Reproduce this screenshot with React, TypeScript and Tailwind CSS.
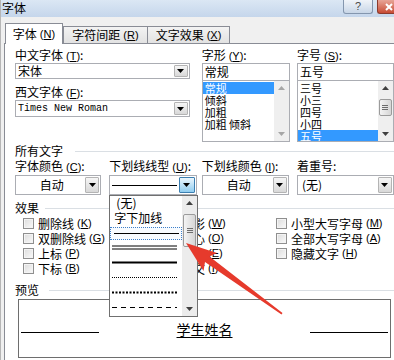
import React from "react";

function Key({ k }: { k: string }) {
  return (
    <span className="ml-[3px] font-['Liberation_Sans',sans-serif] text-[11px]">
      (<span className="underline">{k}</span>)
    </span>
  );
}

function Tri({ up = false, c = "#000" }: { up?: boolean; c?: string }) {
  return (
    <svg width="7" height="4" viewBox="0 0 7 4">
      <path d={up ? "M0 4h7L3.5 0z" : "M0 0h7L3.5 4z"} fill={c} />
    </svg>
  );
}

function DropBtn({ hot = false }: { hot?: boolean }) {
  return (
    <div
      className={
        hot
          ? "flex w-[16px] shrink-0 items-center justify-center rounded-[1px] border border-[#3c7fb1] bg-gradient-to-b from-[#eaf6fd] to-[#8fcdf0]"
          : "flex w-[14px] shrink-0 items-center justify-center rounded-[1px] border border-[#b4b4b4] bg-gradient-to-b from-[#f6f6f6] to-[#d8d8d8]"
      }
    >
      <Tri />
    </div>
  );
}

function Combo({ className, children, hot }: { className: string; children: React.ReactNode; hot?: boolean }) {
  return (
    <div className={"flex border border-[#abadb3] bg-white p-[1px] " + className}>
      <div className="flex min-w-0 flex-1 items-center overflow-hidden whitespace-nowrap pl-[1px] leading-[12px]">{children}</div>
      <DropBtn hot={hot} />
    </div>
  );
}

function Label({ children }: { children: React.ReactNode }) {
  return <div className="h-[16px] whitespace-nowrap leading-[16px]">{children}</div>;
}

function Thumb({ className }: { className: string }) {
  return (
    <div className={"mx-[1px] flex flex-col items-center justify-center gap-[1px] rounded-[2px] border border-[#9b9b9b] bg-gradient-to-r from-[#f4f4f4] to-[#d6d6d6] " + className}>
      <div className="h-px w-[6px] bg-[#6d6d6d]" />
      <div className="h-px w-[6px] bg-[#6d6d6d]" />
      <div className="h-px w-[6px] bg-[#6d6d6d]" />
    </div>
  );
}

function ListBox({ items, sel, thumb }: { items: string[]; sel: number; thumb?: boolean }) {
  return (
    <div className="-mt-px flex h-[62px] border border-[#abadb3] bg-white">
      <div className="flex-1 overflow-hidden pt-[1px] text-[11px]">
        {items.map((t, i) => (
          <div
            key={t}
            className={"h-[12px] whitespace-pre pl-[2px] leading-[12px] " + (i === sel ? "bg-[#3399ff] text-white" : "")}
          >
            {t}
          </div>
        ))}
      </div>
      <div className="flex w-[15px] flex-col bg-[#efefef]">
        <div className="flex h-[14px] items-center justify-center">
          <Tri up c={thumb ? "#404040" : "#a6a6a6"} />
        </div>
        {thumb ? <Thumb className="mt-[4px] h-[17px]" /> : null}
        <div className="flex-1" />
        <div className="flex h-[14px] items-center justify-center">
          <Tri c={thumb ? "#404040" : "#a6a6a6"} />
        </div>
      </div>
    </div>
  );
}

function Check({ t, k }: { t: string; k: string }) {
  return (
    <div className="flex h-[15px] items-center whitespace-nowrap leading-[15px]">
      <span className="mr-[4px] h-[11px] w-[11px] shrink-0 border border-[#8f8f8f] bg-gradient-to-br from-[#dcdcdc] to-[#fafafa] shadow-[inset_0_0_0_1px_#f4f4f4]" />
      {t}
      <Key k={k} />
    </div>
  );
}

function Section({ title, line }: { title: string; line: string }) {
  return (
    <div className="flex h-[14px] items-center leading-[14px]">
      <span className="whitespace-nowrap">{title}</span>
      <div className={"h-px flex-1 bg-[#dadfe4] " + line} />
    </div>
  );
}

function LineSample({ kind }: { kind: string }) {
  return (
    <svg width="65" height="5" viewBox="0 0 65 5">
      {kind === "single" && <line x1="0" y1="2.5" x2="65" y2="2.5" stroke="#000" strokeWidth="1" />}
      {kind === "double" && (
        <>
          <line x1="0" y1="1" x2="65" y2="1" stroke="#000" strokeWidth="1" />
          <line x1="0" y1="4" x2="65" y2="4" stroke="#000" strokeWidth="1" />
        </>
      )}
      {kind === "thick" && <line x1="0" y1="2.5" x2="65" y2="2.5" stroke="#000" strokeWidth="2" />}
      {kind === "dot" && <line x1="0" y1="2.5" x2="65" y2="2.5" stroke="#000" strokeWidth="1" strokeDasharray="1 1" />}
      {kind === "dot2" && <line x1="0" y1="2.5" x2="65" y2="2.5" stroke="#000" strokeWidth="2" strokeDasharray="2 1.5" />}
      {kind === "dash" && <line x1="0" y1="2.5" x2="65" y2="2.5" stroke="#000" strokeWidth="1" strokeDasharray="5 4" />}
    </svg>
  );
}

export default function App() {
  return (
    <div className="relative h-[360px] w-[394px] overflow-hidden border-l border-[#b6b6b6] bg-[#f0f0f0] font-['Noto_Sans_CJK_SC',sans-serif] text-[12px] text-black">
      {/* title bar */}
      <div className="flex h-[17px] items-start justify-between bg-gradient-to-b from-[#dbe7f4] to-[#c5d6eb]">
        <span className="pl-[1px] leading-[16px]">字体</span>
        <div className="flex gap-[4px]">
          <div className="flex h-[14px] w-[30px] items-center justify-center rounded-b-[3px] border border-t-0 border-[#8496ae] bg-gradient-to-b from-[#f0f4f9] to-[#c8d6e7] font-['Liberation_Sans',sans-serif] text-[11px] leading-none text-[#4a4a4a]">
            ?
          </div>
          <div className="flex h-[14px] w-[17px] items-center justify-end rounded-bl-[3px] border border-t-0 border-r-0 border-[#8c3b2e] bg-gradient-to-b from-[#e7a597] to-[#c74a33] pr-[1px]">
            <svg width="8" height="8" viewBox="0 0 8 8">
              <path d="M1 1l6 6M7 1L1 7" stroke="#fff" strokeWidth="2" />
            </svg>
          </div>
        </div>
      </div>

      {/* tabs */}
      <div className="mt-[6px] flex items-end pl-[4px]">
        <div className="relative z-10 flex h-[21px] w-[58px] items-center justify-center border border-b-0 border-[#898c95] bg-white">
          字体<Key k="N" />
        </div>
        <div className="flex h-[18px] w-[85px] items-center justify-center border border-[#898c95] bg-gradient-to-b from-[#f3f3f3] to-[#e2e2e2]">
          字符间距<Key k="R" />
        </div>
        <div className="-ml-px flex h-[18px] w-[83px] items-center justify-center border border-[#898c95] bg-gradient-to-b from-[#f3f3f3] to-[#e2e2e2]">
          文字效果<Key k="X" />
        </div>
      </div>

      {/* tab panel */}
      <div className="-mt-px ml-[3px] h-[330px] border-l border-t border-[#898c95] bg-white pl-[10px]">
        <div className="flex pt-[3px]">
          <div className="w-[180px]">
            <Label>
              中文字体<Key k="T" />:
            </Label>
            <Combo className="h-[16px]">宋体</Combo>
            <div className="mt-[5px]">
              <Label>
                西文字体<Key k="F" />:
              </Label>
            </div>
            <Combo className="h-[17px]">
              <span className="font-['Liberation_Mono',monospace] text-[10px]">Times New Roman</span>
            </Combo>
          </div>
          <div className="ml-[12px] w-[91px]">
            <Label>
              字形<Key k="Y" />:
            </Label>
            <div className="h-[18px] border border-[#abadb3] pl-[2px] leading-[16px]">常规</div>
            <ListBox items={["常规", "倾斜", "加粗", "加粗 倾斜"]} sel={0} />
          </div>
          <div className="ml-[7px] w-[100px]">
            <Label>
              字号<Key k="S" />:
            </Label>
            <div className="h-[18px] border border-[#abadb3] pl-[2px] leading-[16px]">五号</div>
            <ListBox items={["三号", "小三", "四号", "小四", "五号"]} sel={4} thumb />
          </div>
        </div>

        <div className="mt-[2px]">
          <Section title="所有文字" line="ml-[12px]" />
        </div>

        <div className="flex">
          <div className="w-[89px]">
            <Label>
              字体颜色<Key k="C" />:
            </Label>
            <Combo className="mt-[1px] h-[20px]">
              <span className="flex-1 text-center">自动</span>
            </Combo>
          </div>
          <div className="relative ml-[8px] w-[90px]">
            <Label>
              下划线线型<Key k="U" />:
            </Label>
            <Combo className="mt-[1px] h-[20px]" hot>
              <LineSample kind="single" />
            </Combo>
            {/* open dropdown */}
            <div className="absolute left-0 top-[37px] z-20 flex h-[122px] w-[89px] border border-[#707070] bg-white">
              <div className="flex-1">
                <div className="h-[14px] pl-[6px] leading-[14px]">(无)</div>
                <div className="h-[15px] pl-[4px] leading-[15px]">字下加线</div>
                <div className="mt-[2px] flex h-[13px] items-center justify-center border border-dotted border-[#3d7fc9] bg-[#f7fbff]">
                  <LineSample kind="single" />
                </div>
                <div className="flex h-[15px] items-center pl-[2px]">
                  <LineSample kind="double" />
                </div>
                <div className="flex h-[15px] items-center pl-[2px]">
                  <LineSample kind="thick" />
                </div>
                <div className="flex h-[15px] items-center pl-[2px]">
                  <LineSample kind="dot" />
                </div>
                <div className="flex h-[15px] items-center pl-[2px]">
                  <LineSample kind="dot2" />
                </div>
                <div className="flex h-[15px] items-center pl-[2px]">
                  <LineSample kind="dash" />
                </div>
              </div>
              <div className="flex w-[15px] flex-col bg-[#ececec]">
                <div className="flex h-[14px] items-center justify-center">
                  <Tri up c="#404040" />
                </div>
                <Thumb className="mt-[4px] h-[33px]" />
                <div className="flex-1" />
                <div className="flex h-[14px] items-center justify-center">
                  <Tri c="#404040" />
                </div>
              </div>
            </div>
          </div>
          <div className="ml-[5px] w-[90px]">
            <Label>
              下划线颜色<Key k="I" />:
            </Label>
            <Combo className="mt-[1px] h-[20px]">
              <span className="flex-1 text-center">自动</span>
            </Combo>
          </div>
          <div className="ml-[8px] w-[100px]">
            <Label>着重号:</Label>
            <Combo className="mt-[1px] h-[20px]">
              <span className="pl-[2px]">(无)</span>
            </Combo>
          </div>
        </div>

        <div className="mt-[6px]">
          <Section title="效果" line="ml-[6px]" />
        </div>
        <div className="mt-[1px] flex pl-[8px]">
          <div className="w-[143px]">
            <Check t="删除线" k="K" />
            <Check t="双删除线" k="G" />
            <Check t="上标" k="P" />
            <Check t="下标" k="B" />
          </div>
          <div className="w-[110px]">
            <Check t="阴影" k="W" />
            <Check t="空心" k="O" />
            <Check t="阳文" k="E" />
            <Check t="阴文" k="I" />
          </div>
          <div>
            <Check t="小型大写字母" k="M" />
            <Check t="全部大写字母" k="A" />
            <Check t="隐藏文字" k="H" />
          </div>
        </div>

        <div className="mt-[7px]">
          <Section title="预览" line="ml-[10px]" />
        </div>
        <div className="ml-[3px] mt-[2px] flex h-[59px] w-[373px] items-center justify-between border border-[#6e6e6e] px-[2px]">
          <div className="mt-[7px] h-px w-[78px] bg-black" />
          <span className="text-[14px] leading-[16px] underline underline-offset-[2px]">学生姓名</span>
          <div className="mt-[7px] h-px w-[78px] bg-black" />
        </div>
      </div>

      {/* red annotation arrow */}
      <svg className="pointer-events-none absolute left-0 top-0 z-30" width="394" height="360" viewBox="0 0 394 360">
        <polygon
          points="185,243 216,253 208.5,256.5 281.5,313 280.5,314.5 204,262 202.5,271"
          fill="#e63a2c"
        />
      </svg>
    </div>
  );
}
